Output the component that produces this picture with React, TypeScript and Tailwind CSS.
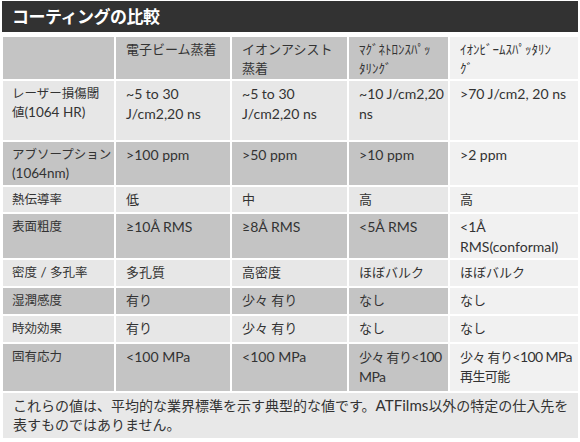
import { Fragment } from 'react';

const cols = 'grid grid-cols-[111px_114px_115px_99px_128px] gap-x-[2px]';
const CJK = /([\u3000-\u30ff\u4e00-\u9fff\uff00-\uffef]+)/;

// Latin runs are set a touch larger, like Calibri next to Meiryo in the source slide
function T({ s }: { s: string }) {
  const parts = s.split(CJK);
  return (
    <>
      {parts.map((p, i) =>
        p === '' ? null : i % 2 === 1 || p.trim() === '' ? (
          <Fragment key={i}>{p}</Fragment>
        ) : (
          <span key={i} className="text-[1.08em]">
            {p}
          </span>
        ),
      )}
    </>
  );
}

function Lines({ l }: { l: string[] }) {
  return (
    <>
      {l.map((s, i) => (
        <Fragment key={i}>
          {i > 0 && <br />}
          <T s={s} />
        </Fragment>
      ))}
    </>
  );
}

type Row = { h: string; dark: boolean; cells: string[][] };

const rows: Row[] = [
  {
    h: 'h-[42px]',
    dark: true,
    cells: [[''], ['電子ビーム蒸着'], ['イオンアシスト', '蒸着'], ['ﾏｸﾞﾈﾄﾛﾝｽﾊﾟｯ', 'ﾀﾘﾝｸﾞ'], ['ｲｵﾝﾋﾞｰﾑｽﾊﾟｯﾀﾘﾝ', 'ｸﾞ']],
  },
  {
    h: 'h-[59px]',
    dark: false,
    cells: [
      ['レーザー損傷閾', '値(1064 HR)'],
      ['~5 to 30', 'J/cm2,20 ns'],
      ['~5 to 30', 'J/cm2,20 ns'],
      ['~10 J/cm2,20', 'ns'],
      ['>70 J/cm2, 20 ns'],
    ],
  },
  {
    h: 'h-[43px]',
    dark: true,
    cells: [['アブソープション', '(1064nm)'], ['>100 ppm'], ['>50 ppm'], ['>10 ppm'], ['>2 ppm']],
  },
  { h: 'h-[25px]', dark: false, cells: [['熱伝導率'], ['低'], ['中'], ['高'], ['高']] },
  {
    h: 'h-[44px]',
    dark: true,
    cells: [['表面粗度'], ['≥10Å RMS'], ['≥8Å RMS'], ['<5Å RMS'], ['<1Å', 'RMS(conformal)']],
  },
  { h: 'h-[26px]', dark: false, cells: [['密度 / 多孔率'], ['多孔質'], ['高密度'], ['ほぼバルク'], ['ほぼバルク']] },
  { h: 'h-[26px]', dark: true, cells: [['湿潤感度'], ['有り'], ['少々 有り'], ['なし'], ['なし']] },
  { h: 'h-[26px]', dark: false, cells: [['時効効果'], ['有り'], ['少々 有り'], ['なし'], ['なし']] },
  {
    h: 'h-[47px]',
    dark: true,
    cells: [['固有応力'], ['<100 MPa'], ['<100 MPa'], ['少々 有り<100', 'MPa'], ['少々 有り<100 MPa', '再生可能']],
  },
];

export default function App() {
  return (
    <div
      className="w-[580px] h-[442px] bg-white overflow-hidden pt-[1px]"
      style={{ fontFamily: 'Lato, "Noto Sans CJK JP", sans-serif' }}
    >
      <div className="mx-[2px] h-[31px] bg-[#323232] flex items-center pl-[10px]">
        <h1 className="text-white font-bold text-[17px] leading-none tracking-[-0.5px]">コーティングの比較</h1>
      </div>
      <div className="mt-[5px] ml-[3px] flex flex-col gap-y-[2px]">
        {rows.map((r, i) => (
          <div key={i} className={`${cols} ${r.h}`}>
            {r.cells.map((c, j) => (
              <div
                key={j}
                className={`${
                  j === 4 ? 'bg-[#f1f1f1]' : r.dark ? 'bg-[#c4c4c4]' : 'bg-[#e7e7e7]'
                } ${j === 0 ? 'pl-[9px] text-[12.5px]' : 'pl-[10px] text-[13px]'} ${
                  i === 8 && j >= 3 ? 'tracking-[-0.6px]' : ''
                } pt-[3px] leading-[19px] text-[#333] whitespace-nowrap overflow-hidden`}
              >
                <Lines l={c} />
              </div>
            ))}
          </div>
        ))}
        <div className="w-[575px] h-[45px] bg-[#e8e8e8] px-[10px] pt-[3px] text-[14px] leading-[19px] text-[#333] whitespace-nowrap">
          <Lines
            l={[
              'これらの値は、平均的な業界標準を示す典型的な値です。ATFilms以外の特定の仕入先を',
              '表すものではありません。',
            ]}
          />
        </div>
      </div>
    </div>
  );
}
